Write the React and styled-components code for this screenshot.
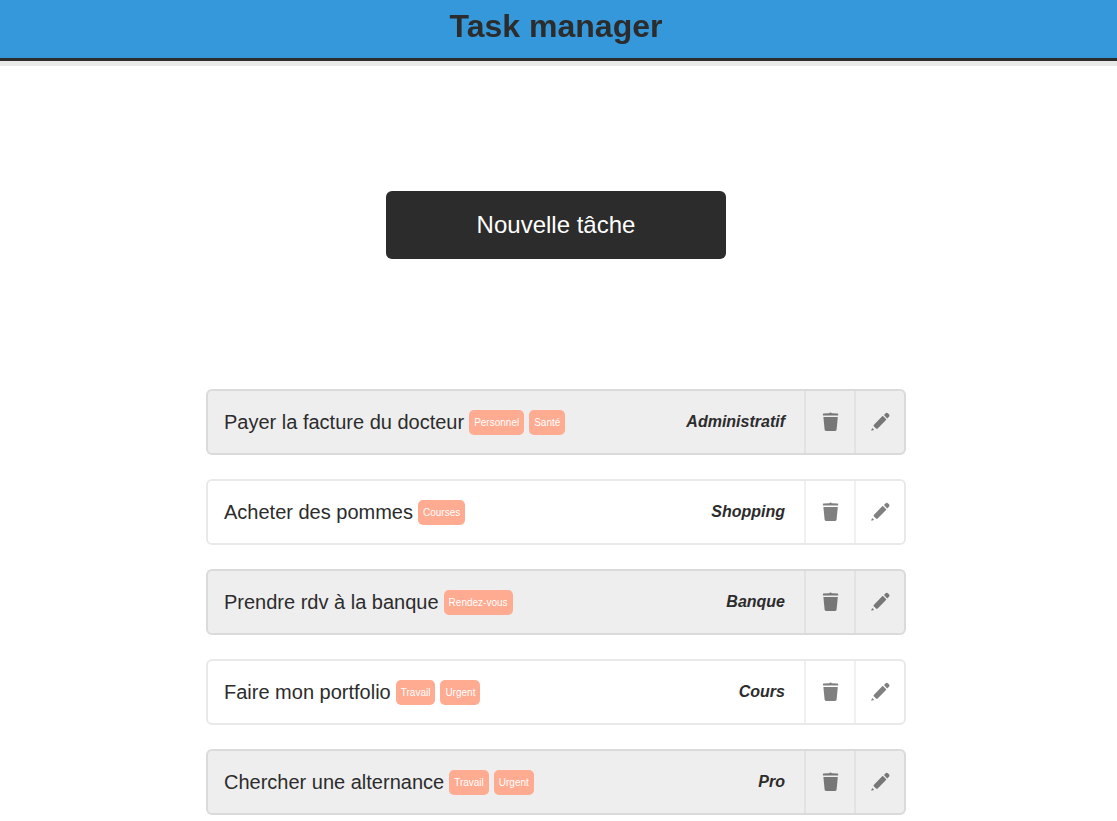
import React from "react";
import styled, { createGlobalStyle } from "styled-components";

const GlobalStyle = createGlobalStyle`
  *, *::before, *::after { box-sizing: border-box; }
  body {
    margin: 0;
    background: #fff;
    color: #2c2c2c;
    font-family: "Liberation Sans", Arial, sans-serif;
  }
`;

const Header = styled.header`
  padding: 8px 5px 13px 0;
  background: #3498db;
  border-bottom: 3px solid #2c2c2c;
  box-shadow: 0 5px 0 #e9e9e9;
  text-align: center;
`;

const Title = styled.h1`
  margin: 0;
  font-size: 32px;
  line-height: 37px;
  will-change: transform;
`;

const Main = styled.main`
  display: flex;
  flex-direction: column;
  align-items: center;
  gap: 130px;
  padding: 130px 5px 6px 0;
`;

const NewTaskButton = styled.button`
  width: 340px;
  height: 68px;
  border: 0;
  border-radius: 6px;
  background: #2c2c2c;
  color: #fff;
  font: 24px "Liberation Sans", Arial, sans-serif;
  cursor: pointer;
`;

const TaskList = styled.ul`
  display: flex;
  flex-direction: column;
  gap: 24px;
  width: 100%;
  max-width: 700px;
  margin: 0;
  padding: 0;
  list-style: none;
`;

const TaskRow = styled.li`
  display: flex;
  align-items: stretch;
  height: 66px;
  border: 2px solid ${(p) => (p.$shaded ? "#dadada" : "#e9e9e9")};
  border-radius: 6px;
  background: ${(p) => (p.$shaded ? "#eeeeee" : "#ffffff")};
`;

const TaskInfo = styled.div`
  display: flex;
  flex: 1;
  align-items: center;
  gap: 5px;
  padding: 0 16px;
  font-size: 20px;
`;

const Tag = styled.span`
  padding: 0 5px;
  border-radius: 5px;
  background: #ffab91;
  color: #fff;
  font-size: 10px;
  line-height: 25px;
`;

const Category = styled.span`
  padding-right: 19px;
  font-size: 16px;
  font-style: italic;
  font-weight: bold;
  line-height: 62px;
`;

const IconButton = styled.button`
  display: flex;
  align-items: center;
  justify-content: center;
  width: 50px;
  padding: 0;
  border: 0;
  border-left: 2px solid ${(p) => (p.$shaded ? "#e2e2e2" : "#f1f1f1")};
  background: transparent;
  color: ${(p) => (p.$shaded ? "#777777" : "#808080")};
  cursor: pointer;
`;

const Icon = styled.svg`
  width: 20px;
  height: 20px;
  fill: currentColor;
`;

const TrashIcon = () => (
  <Icon viewBox="0 0 20 20" aria-hidden="true">
    <path d="M2.9 3.5V2.4c0-.5.2-.7.7-.8l5.7-.3c.1 0 .2-.1.2-.2 0-.4.3-.7.8-.7h.5c.5 0 .8.3.8.7 0 .1.1.2.2.2l5.7.3c.5.1.7.3.7.8v1.1z" />
    <path d="M3.4 5h14.4l-1.2 12.6c-.1.9-.6 1.4-1.5 1.4H6.1c-.9 0-1.4-.5-1.5-1.4z" />
  </Icon>
);

const PencilIcon = () => (
  <Icon viewBox="0 0 20 20" aria-hidden="true">
    <path d="M14.4 2.5l1-1c.9-.9 1.9-.8 2.7-.1l.8.8c.8.8.8 1.8 0 2.6l-1.1 1.1c-.4.4-.7.4-1.1 0l-2.3-2.3c-.4-.4-.4-.7 0-1.1z" />
    <path d="M12.2 4.3c.3-.3.7-.3 1 0l2.8 2.8c.3.3.3.7 0 1l-8.3 8.3c-.6.6-1.1.6-1.7 0l-2-2c-.6-.6-.6-1.1 0-1.7z" />
    <path d="M1.9 16.8c.1-.5.6-.7 1-.3l.7.7c.4.4.2.9-.3 1l-1.4.4c-.5.2-.8-.1-.6-.6z" />
  </Icon>
);

const tasks = [
  { name: "Payer la facture du docteur", tags: ["Personnel", "Santé"], category: "Administratif" },
  { name: "Acheter des pommes", tags: ["Courses"], category: "Shopping" },
  { name: "Prendre rdv à la banque", tags: ["Rendez-vous"], category: "Banque" },
  { name: "Faire mon portfolio", tags: ["Travail", "Urgent"], category: "Cours" },
  { name: "Chercher une alternance", tags: ["Travail", "Urgent"], category: "Pro" },
];

export default function App() {
  return (
    <>
      <GlobalStyle />
      <Header>
        <Title>Task manager</Title>
      </Header>
      <Main>
        <NewTaskButton type="button">Nouvelle tâche</NewTaskButton>
        <TaskList>
          {tasks.map((task, index) => {
            const shaded = index % 2 === 0;
            return (
              <TaskRow key={task.name} $shaded={shaded}>
                <TaskInfo>
                  <span>{task.name}</span>
                  {task.tags.map((tag) => (
                    <Tag key={tag}>{tag}</Tag>
                  ))}
                </TaskInfo>
                <Category>{task.category}</Category>
                <IconButton type="button" $shaded={shaded} aria-label={`Supprimer ${task.name}`}>
                  <TrashIcon />
                </IconButton>
                <IconButton type="button" $shaded={shaded} aria-label={`Modifier ${task.name}`}>
                  <PencilIcon />
                </IconButton>
              </TaskRow>
            );
          })}
        </TaskList>
      </Main>
    </>
  );
}
